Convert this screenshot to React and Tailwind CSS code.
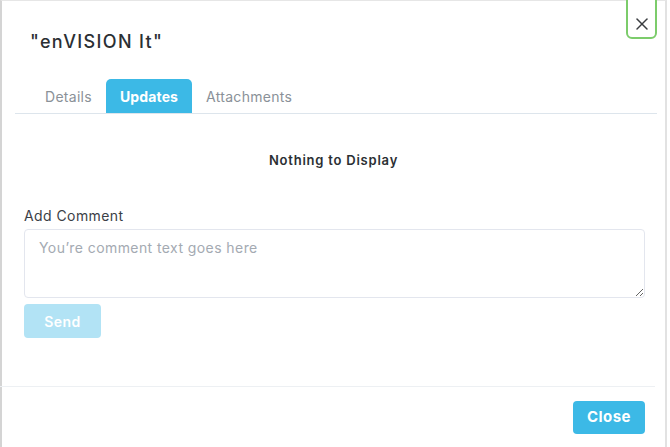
import { X } from 'lucide-react';

const tabs = ['Details', 'Updates', 'Attachments'];

export default function App() {
  return (
    <div className="relative w-[670px] h-[447px] overflow-hidden bg-white" style={{ fontFamily: 'Inter, "Noto Sans", sans-serif' }}>
      <div className="flex h-full">
        <div className="flex flex-col w-[667px] h-full border-l-2 border-t border-l-[#d4d4d4] border-t-[#e6e6e6] border-r-2 border-r-[#e2e2e2]">
          <h1 className="pl-[28px] pt-[28px] h-[78px] text-[18px] font-medium tracking-[0.075em] text-[#2b2f33] leading-[26px]">
            "enVISION It"
          </h1>

          <div className="ml-[13px] w-[642px] flex border-b border-[#dde5ec] pl-[16px]">
            {tabs.map((tab) => (
              <div
                key={tab}
                className={
                  tab === 'Updates'
                    ? 'h-[34px] px-[14px] flex items-center rounded-t-[5px] bg-[#3cb9e6] text-white font-bold text-[14px] tracking-[0.01em]'
                    : 'h-[34px] px-[14px] flex items-center text-[#8a9198] text-[14px] tracking-[0.02em]'
                }
              >
                {tab}
              </div>
            ))}
          </div>

          <p className="mt-[37px] h-[18px] text-center text-[13px] font-semibold tracking-[0.06em] text-[#2b2f33] leading-[18px]">
            Nothing to Display
          </p>

          <div className="pl-[22px] mt-[38px]">
            <label className="block h-[18px] text-[14px] tracking-[0.03em] text-[#3b4046] leading-[18px]">Add Comment</label>
            <textarea
              className="mt-[4px] block w-[621px] h-[69px] border border-[#e3e6ee] rounded-[4px] px-[14px] py-[7px] text-[14px] tracking-[0.03em] text-[#3b4046] placeholder:text-[#a4aab2] outline-none resize-y"
              placeholder="You’re comment text goes here"
            />
            <button className="mt-[6px] w-[77px] h-[34px] rounded-[4px] bg-[#b2e3f5] text-white font-semibold text-[14px] tracking-[0.03em]">
              Send
            </button>
          </div>

          <div className="mt-[48px] w-[655px] -ml-[2px] border-t border-[#edf0f3]" />

          <div className="flex justify-end pr-[20px] pt-[14px]">
            <button className="w-[72px] h-[33px] rounded-[4px] bg-[#3cb9e6] text-white font-bold text-[15px] tracking-[0.03em]">
              Close
            </button>
          </div>
        </div>
      </div>

      <button className="absolute left-[626px] -top-[4px] w-[31px] h-[43px] flex items-end justify-center pb-[3px] border-2 border-[#7ccc6b] rounded-b-[6px] bg-white">
        <X className="w-[20px] h-[20px] text-[#3a3d40]" strokeWidth={1.8} />
      </button>
    </div>
  );
}
